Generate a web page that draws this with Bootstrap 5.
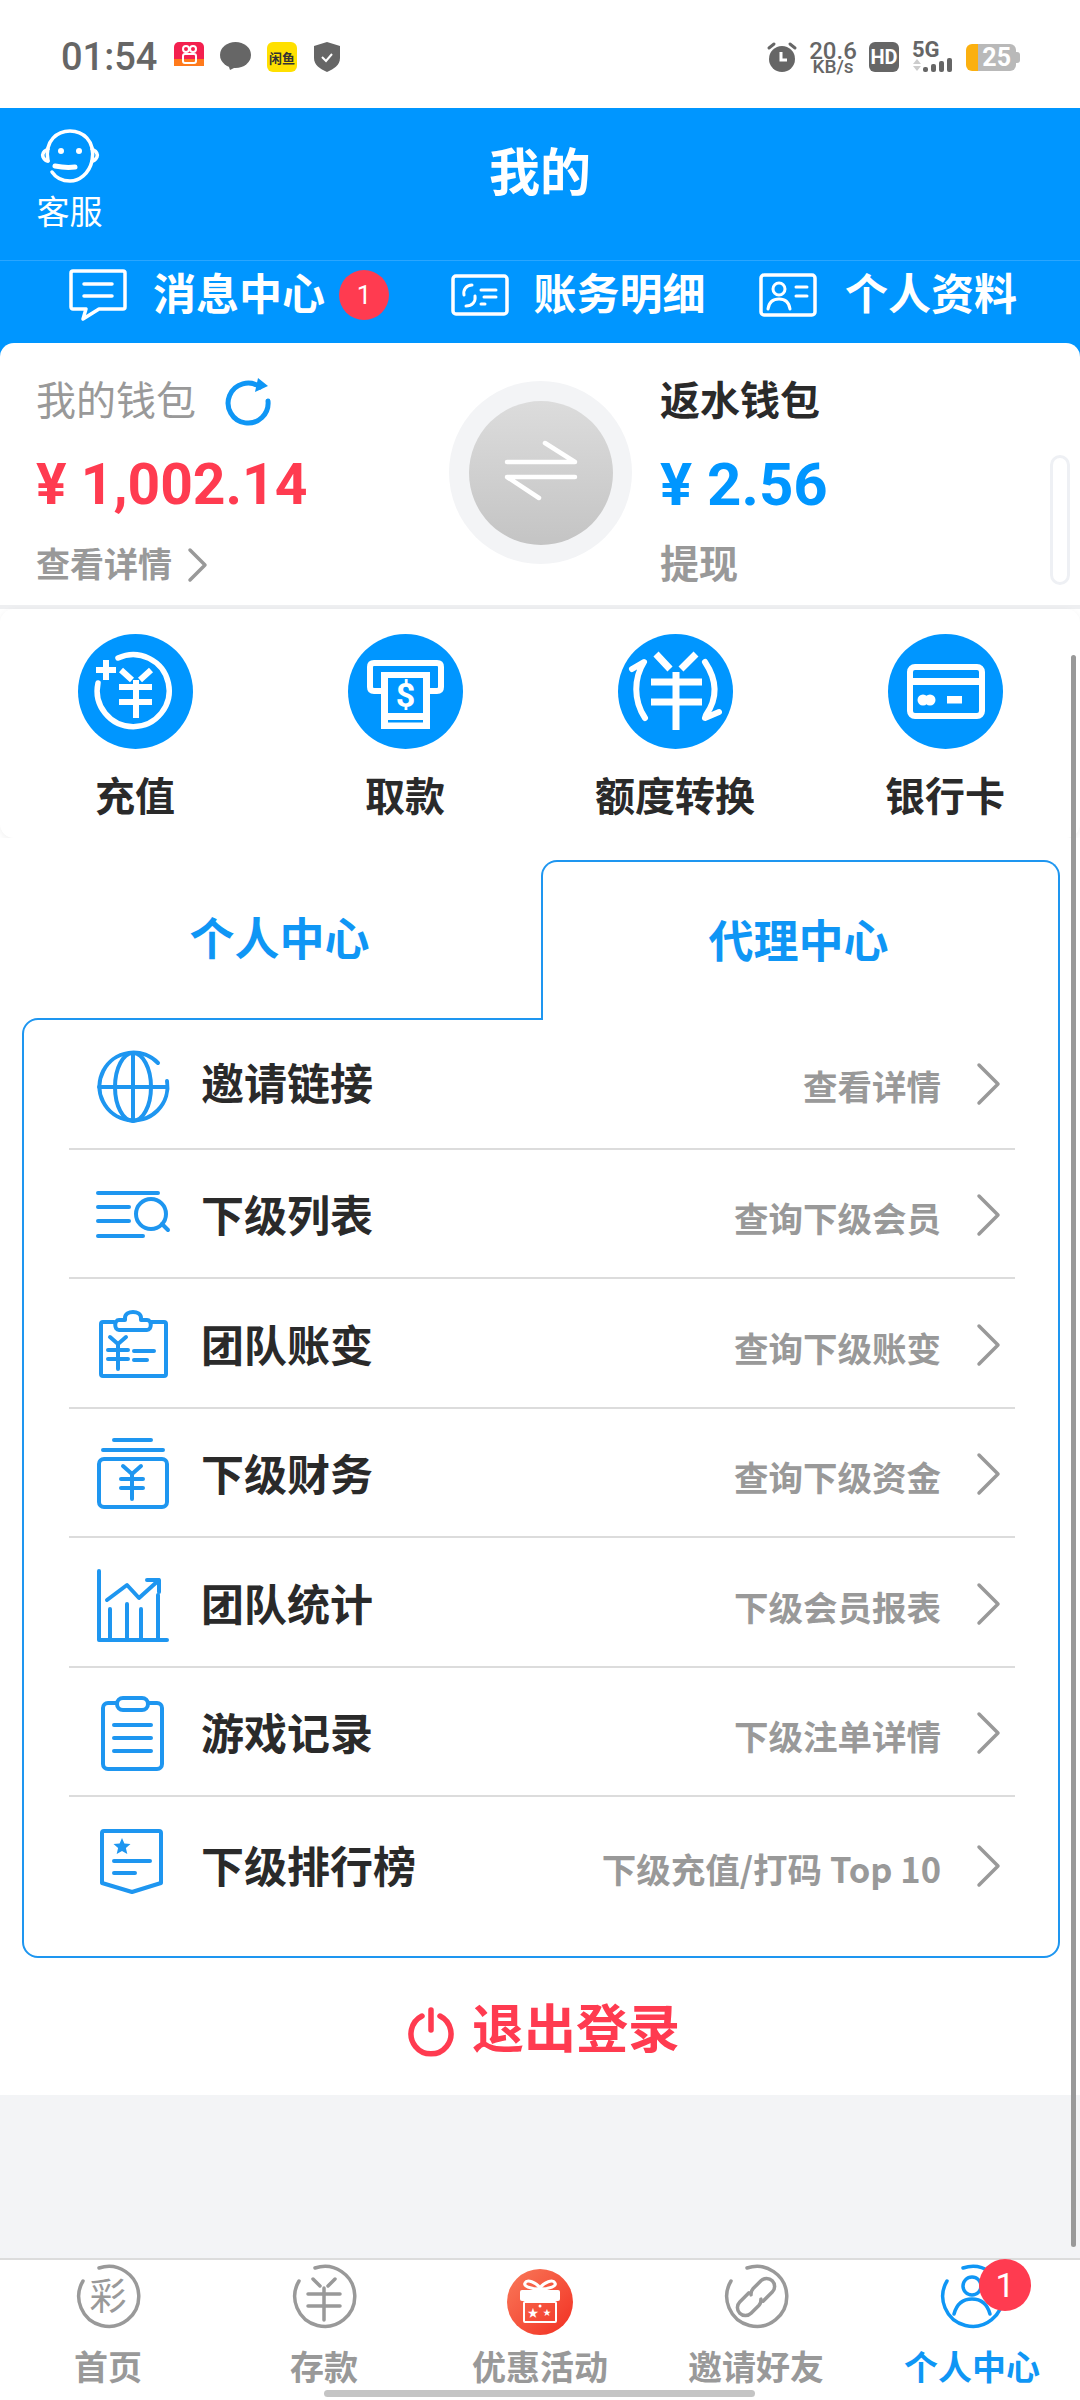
<!DOCTYPE html>
<html lang="zh-CN">
<head>
    <meta charset="UTF-8">
    <meta name="viewport" content="width=device-width, initial-scale=1.0">
    <title>我的</title>
    <link href="https://cdn.jsdelivr.net/npm/bootstrap@5.3.1/dist/css/bootstrap.min.css" rel="stylesheet">
    <style>
        html, body { height: 2400px; }
        body {
            width: 1080px;
            overflow: hidden;
            background: #fff;
            color: #2a2a2a;
            font-family: "Roboto", "Noto Sans CJK SC", sans-serif;
        }
        svg { display: block; overflow: visible; flex-shrink: 0; }
        .phone { position: relative; width: 1080px; height: 2400px; }

        /* status bar */
        .status-bar { height: 108px; padding: 42px 60px 0 61px; }
        .status-time { font-size: 38px; line-height: 30px; font-weight: 500; color: #666; margin-right: 17px; }
        .status-speed { width: 48px; margin: 0 12px; color: #666; text-align: center; font-weight: 500; }
        .status-speed b { display: block; font-size: 24px; line-height: 18px; font-weight: 500; }
        .status-speed i { display: block; font-size: 19px; line-height: 14px; font-style: normal; white-space: nowrap; }
        .hd-box { width: 30px; height: 30px; border-radius: 6px; background: #666; color: #fff; font-size: 20px; line-height: 30px; font-weight: 700; text-align: center; }
        .net-box { width: 44px; margin-left: 13px; height: 30px; }
        .net-box span { display: block; font-size: 22px; line-height: 16px; font-weight: 700; color: #666; }
        .batt { width: 50px; height: 27px; margin-left: 10px; border-radius: 6px; background: linear-gradient(90deg, #fbb010 24%, #b9b9b9 24%); color: #fff; font-size: 25px; line-height: 27px; font-weight: 700; text-align: right; padding-right: 5px; }
        .batt-tip { width: 4px; height: 11px; background: #b9b9b9; border-radius: 0 3px 3px 0; }

        /* blue header */
        .top-head { height: 152px; background: #0096ff; color: #fff; padding: 22px 0 0 36px; }
        .kefu-btn { width: 67px; }
        .kefu-btn span { display: block; font-size: 33px; line-height: 44px; margin-top: 9px; }
        .top-title { position: absolute; left: 0; right: 0; top: 141px; text-align: center; font-size: 51px; line-height: 66px; font-weight: 700; color: #fff; }
        .sub-nav { height: 83px; background: #0096ff; border-top: 1px solid #2aa6ff; padding: 0 63px 14px 69px; color: #fff; }
        .sub-item { font-size: 43px; line-height: 60px; font-weight: 700; }
        .dot-red { width: 50px; height: 50px; background: #ff3b50; color: #fff; font-size: 26px; font-weight: 400; line-height: 50px; text-align: center; border-radius: 50%; margin-left: 14px; }

        /* wallets */
        .wallet-wrap { background: linear-gradient(#0096ff 14px, #fff 14px); }
        .wallet-box { height: 262px; background: #fff; padding-top: 21px; border-radius: 14px 14px 0 0; }
        .wallet-left { width: 449px; padding-left: 36px; }
        .wallet-right { padding-left: 28px; }
        .wallet-label { font-size: 40px; line-height: 76px; color: #999; }
        .wallet-label.is-dark { color: #2a2a2a; font-weight: 700; }
        .wallet-money { font-size: 57px; line-height: 89px; font-weight: 700; color: #ff3b50; }
        .wallet-money.is-blue { color: #0096ff; font-size: 60px; }
        .wallet-link { font-size: 34px; line-height: 72px; color: #999; font-weight: 700; }
        .wallet-link.is-big { font-size: 39px; }
        .swap-ring { width: 183px; height: 183px; margin-top: 17px; border-radius: 50%; background: #f3f4f6; }
        .swap-core { width: 144px; height: 144px; border-radius: 50%; background: linear-gradient(180deg, #dcdcdc, #c4c4c4); }
        .mini-track { position: absolute; left: 1050px; top: 455px; width: 20px; height: 130px; border: 3px solid #eef0f4; border-radius: 10px; background: #fff; }

        /* quick actions */
        .gray-gap { height: 4px; background: #eeeff1; }
        .quick-box { height: 229px; background: #fff; padding-top: 25px; border-radius: 14px; box-shadow: 0 2px 6px rgba(0, 0, 0, .06); }
        .quick-ico { width: 115px; height: 115px; border-radius: 50%; background: #0096ff; margin: 0 auto; }
        .quick-txt { font-size: 40px; line-height: 50px; font-weight: 700; margin-top: 24px; color: #2a2a2a; }

        /* tabs + panel */
        .center-wrap { height: 1257px; background: #fff; padding: 22px 20px 0 22px; }
        .tab-strip { height: 158px; position: relative; z-index: 1; }
        .tab-btn { width: 50%; height: 158px; padding: 0 4px 0 0; font-size: 45px; line-height: 161px; font-weight: 700; color: #0f96f5; text-align: center; }
        .tab-btn.active { height: 160px; background: #fff; color: #0f96f5; border: 2px solid #1e96f0; border-bottom: 0; border-radius: 16px 16px 0 0; }
        .panel-box { height: 940px; border: 2px solid #1e96f0; border-radius: 16px 0 16px 16px; padding: 0 43px 0 45px; background: #fff; }
        .panel-list .row-item { height: 129.5px; padding: 0 15px 0 28px; background: transparent; border-color: #dcdcdc; border-width: 0 0 2px; }
        .panel-list .row-item:last-child { height: 158px; padding-bottom: 24px; border-bottom: 0; }
        .row-ico { width: 72px; height: 72px; margin-right: 32px; }
        .row-name { font-size: 43px; line-height: 60px; padding-top: 2px; font-weight: 700; color: #2a2a2a; }
        .row-desc { font-family: "Noto Sans CJK SC", sans-serif; font-size: 34.5px; line-height: 50px; padding-top: 2px; font-weight: 700; color: #999; margin-right: 36px; }
        .row-item + .row-item .row-name,
        .row-item + .row-item .row-desc { padding-top: 8px; }
        .row-item + .row-item .row-arrow { margin-top: 4px; }

        .logout-bar { height: 137px; padding: 8px 0 0 7px; color: #ff3b50; font-size: 52px; font-weight: 700; }
        .gray-fill { height: 163px; background: #f3f4f6; }

        /* bottom tabs */
        .foot-nav { height: 142px; border-top: 2px solid #dcdcdc; background: #fff; }
        .foot-item { width: 216px; position: relative; padding-top: 4px; }
        .foot-item span { display: block; margin-top: 9px; font-size: 34px; line-height: 50px; font-weight: 700; color: #999; }
        .foot-item.is-on span { color: #0f96f5; }
        .foot-badge { position: absolute; left: 115px; top: -1px; width: 52px; height: 52px; line-height: 52px; border-radius: 50%; background: #ff3b50; color: #fff; font-size: 34px; text-align: center; }
        .home-bar { position: absolute; left: 324px; bottom: 3px; width: 431px; height: 7px; border-radius: 4px; background: #c4c4c4; }
        .page-scroll { position: absolute; left: 1071px; top: 655px; width: 5px; height: 1592px; border-radius: 3px; background: #999; z-index: 2; }

        .line-blue { fill: none; stroke: #1e96f0; stroke-width: 4; stroke-linecap: round; stroke-linejoin: round; }
        .line-white { fill: none; stroke: #fff; stroke-linecap: round; stroke-linejoin: round; }
        .line-gray { fill: none; stroke: #999; stroke-width: 3.5; stroke-linecap: round; stroke-linejoin: round; }
    </style>
</head>
<body>
<div class="phone">

    <!-- Status bar -->
    <div class="status-bar d-flex align-items-start">
        <div class="status-time">01:54</div>
        <svg width="30" height="30" viewBox="0 0 30 30">
            <rect width="30" height="30" rx="5" fill="#f3204f"/>
            <rect y="17" width="30" height="8" fill="#ff7a1c"/>
            <rect y="24" width="30" height="6" fill="#fff"/>
            <circle cx="12" cy="7" r="3" fill="none" stroke="#fff" stroke-width="2"/>
            <circle cx="19" cy="7" r="3" fill="none" stroke="#fff" stroke-width="2"/>
            <rect x="9" y="12" width="13" height="9" rx="2" fill="none" stroke="#fff" stroke-width="2"/>
        </svg>
        <svg class="ms-3" width="31" height="30" viewBox="0 0 31 30"><ellipse cx="15.5" cy="13" rx="15.5" ry="13" fill="#666"/><path d="M8 22l2 6 8-4z" fill="#666"/></svg>
        <svg class="ms-3" width="30" height="30" viewBox="0 0 30 30">
            <rect width="30" height="30" rx="6" fill="#ffe000"/>
            <text x="15" y="21" text-anchor="middle" font-size="13" font-weight="700" fill="#333" font-family="Noto Sans CJK SC">闲鱼</text>
        </svg>
        <svg style="margin-left:17px" width="26" height="30" viewBox="0 0 26 30"><path d="M13 0l13 4v12c0 7-6 11-13 14C6 27 0 23 0 16V4z" fill="#666"/><path d="M8 15l4 4 6-7" fill="none" stroke="#fff" stroke-width="2"/></svg>
        <div class="flex-grow-1"></div>
        <svg width="30" height="30" viewBox="0 0 30 30">
            <circle cx="15" cy="17" r="13" fill="#666"/>
            <path d="M2 6l5-4M28 6l-5-4" stroke="#666" stroke-width="3" stroke-linecap="round"/>
            <path d="M14 10v8h6" fill="none" stroke="#fff" stroke-width="3"/>
        </svg>
        <div class="status-speed"><b>20.6</b><i>KB/s</i></div>
        <div class="hd-box">HD</div>
        <div class="net-box">
            <span>5G</span>
            <svg width="44" height="14" viewBox="0 0 44 14">
                <path d="M5 1l4 5H1zM5 13l4-5H1z" fill="#ccc"/>
                <rect x="11" y="9" width="5" height="5" rx="2" fill="#666"/>
                <rect x="19" y="6" width="5" height="8" rx="2" fill="#666"/>
                <rect x="27" y="3" width="5" height="11" rx="2" fill="#666"/>
                <rect x="35" y="0" width="5" height="14" rx="2" fill="#666"/>
            </svg>
        </div>
        <div class="batt" style="margin-top:2px">25</div>
        <div class="batt-tip" style="margin-top:10px"></div>
    </div>

    <!-- Header -->
    <div class="top-head">
        <div class="kefu-btn text-center">
            <svg class="mx-auto" width="58" height="52" viewBox="0 0 58 52">
                <path class="line-white" stroke-width="3.5" d="M7 31C3 10 17 1 29 1s26 9 22 30c-3 13-13 20-22 20-8 0-14-3-18-9"/>
                <path class="line-white" stroke-width="3.5" d="M7 19c-4 2-6 5-5 8 1 2 3 4 5 4M51 19c4 2 6 5 5 8-1 2-3 4-5 4"/>
                <circle cx="20" cy="21" r="3" fill="#fff"/><circle cx="38" cy="21" r="3" fill="#fff"/>
                <path class="line-white" stroke-width="5" d="M14 36c5 1 12 2 20 1"/>
            </svg>
            <span>客服</span>
        </div>
    </div>
    <div class="top-title">我的</div>

    <div class="sub-nav d-flex align-items-center justify-content-between">
        <div class="d-flex align-items-center">
            <svg width="58" height="52" viewBox="0 0 58 52" style="margin-right:26px">
                <path class="line-white" stroke-width="3.5" d="M4 2h50a2 2 0 0 1 2 2v34a2 2 0 0 1-2 2H30L14 50l3-10H4a2 2 0 0 1-2-2V4a2 2 0 0 1 2-2z"/>
                <path class="line-white" stroke-width="3.5" d="M15 15h28M15 27h28"/>
            </svg>
            <div class="sub-item">消息中心</div>
            <div class="dot-red">1</div>
        </div>
        <div class="d-flex align-items-center ms-2">
            <svg width="58" height="42" viewBox="0 0 58 42" style="margin-right:25px">
                <rect class="line-white" stroke-width="3.5" x="2" y="2" width="54" height="38" rx="3"/>
                <path class="line-white" stroke-width="3" d="M21 11c-6 0-9 5-8 10M15 32c6 0 10-4 9-10M30 16h15M33 23h12M30 30h4"/>
            </svg>
            <div class="sub-item">账务明细</div>
        </div>
        <div class="d-flex align-items-center">
            <svg width="58" height="44" viewBox="0 0 58 44" style="margin-right:28px">
                <rect class="line-white" stroke-width="3.5" x="2" y="2" width="54" height="40" rx="3"/>
                <circle class="line-white" stroke-width="3" cx="20" cy="16" r="6"/>
                <path class="line-white" stroke-width="3" d="M9 36c1-7 5-10 11-10s10 3 11 10M37 14h11M37 23h11"/>
            </svg>
            <div class="sub-item">个人资料</div>
        </div>
    </div>

    <!-- Wallets -->
    <div class="wallet-wrap">
        <div class="wallet-box d-flex">
            <div class="wallet-left">
                <div class="wallet-label d-flex align-items-center">我的钱包
                    <svg style="margin-left:31px" width="44" height="48" viewBox="0 0 44 48">
                        <path fill="none" stroke="#0f96f5" stroke-width="5" stroke-linecap="round" d="M33 9A20 20 0 1 0 41 23"/>
                        <path fill="#0f96f5" d="M31 0l10 8-13 6z"/>
                    </svg>
                </div>
                <div class="wallet-money">¥ 1,002.14</div>
                <div class="wallet-link d-flex align-items-center">查看详情
                    <svg class="ms-3" width="19" height="34" viewBox="0 0 19 34"><path d="M2 2l15 15L2 32" fill="none" stroke="#999" stroke-width="3.5" stroke-linecap="round" stroke-linejoin="round"/></svg>
                </div>
            </div>
            <div class="swap-ring d-flex align-items-center justify-content-center">
                <div class="swap-core d-flex align-items-center justify-content-center">
                    <svg width="72" height="60" viewBox="0 0 72 60">
                        <path class="line-white" stroke-width="4.5" d="M2 19h68L40 0M70 34H2l32 21"/>
                    </svg>
                </div>
            </div>
            <div class="wallet-right">
                <div class="wallet-label is-dark">返水钱包</div>
                <div class="wallet-money is-blue">¥ 2.56</div>
                <div class="wallet-link is-big">提现</div>
            </div>
        </div>
    </div>
    <div class="mini-track"></div>
    <div class="gray-gap"></div>

    <!-- Quick actions -->
    <div class="quick-box row g-0 text-center">
        <div class="col-3">
            <div class="quick-ico">
                <svg width="115" height="115" viewBox="0 0 115 115">
                    <path class="line-white" stroke-width="5.5" d="M40 24A36 36 0 1 1 20 49"/>
                    <path class="line-white" stroke-width="6" style="stroke-linecap:butt" d="M18 36h20M28 26v20"/>
                    <path class="line-white" stroke-width="6" style="stroke-linecap:butt" d="M43 36l11 10M73 36L62 46M41 53h33M41 68h33M58 46v38"/>
                </svg>
            </div>
            <div class="quick-txt">充值</div>
        </div>
        <div class="col-3">
            <div class="quick-ico">
                <svg width="115" height="115" viewBox="0 0 115 115">
                    <path class="line-white" stroke-width="6" d="M33 57h-7q-4 0-4-4V33q0-4 4-4h63q4 0 4 4v20q0 4-4 4h-7"/>
                    <rect x="33" y="38" width="49" height="57" fill="#fff"/>
                    <rect x="40" y="44" width="35" height="35" fill="#0096ff"/>
                    <rect x="40" y="86" width="35" height="2.5" fill="#0096ff"/>
                    <text x="57.5" y="73" text-anchor="middle" font-size="34" font-weight="700" fill="#fff" font-family="Roboto">$</text>
                </svg>
            </div>
            <div class="quick-txt">取款</div>
        </div>
        <div class="col-3">
            <div class="quick-ico">
                <svg width="115" height="115" viewBox="0 0 115 115">
                    <path class="line-white" stroke-width="7" style="stroke-linecap:butt" d="M38 20l14 15M78 20L63 35M33 48h51M33 68h51M58 38v58"/>
                    <path class="line-white" stroke-width="6" d="M27 84C15 66 16 44 26 28l-12 7"/>
                    <path class="line-white" stroke-width="6" d="M87 28c12 18 13 36 1 53l-1 3 14-6"/>
                </svg>
            </div>
            <div class="quick-txt">额度转换</div>
        </div>
        <div class="col-3">
            <div class="quick-ico">
                <svg width="115" height="115" viewBox="0 0 115 115">
                    <rect class="line-white" stroke-width="6" x="22" y="33" width="72" height="49" rx="5"/>
                    <rect x="22" y="44" width="72" height="7" fill="#fff"/>
                    <circle cx="35" cy="66" r="5.5" fill="#fff"/><circle cx="42" cy="66" r="5.5" fill="#fff"/>
                    <rect x="59" y="62" width="15" height="7.5" fill="#fff"/>
                </svg>
            </div>
            <div class="quick-txt">银行卡</div>
        </div>
    </div>

    <!-- Tabs + list -->
    <div class="center-wrap">
        <div class="tab-strip nav">
            <a class="nav-link tab-btn" href="#">个人中心</a>
            <a class="nav-link tab-btn active" href="#">代理中心</a>
        </div>
        <div class="panel-box">
            <ul class="panel-list list-group list-group-flush">
                <li class="row-item list-group-item d-flex align-items-center">
                    <svg class="row-ico" viewBox="0 0 72 72">
                        <path class="line-blue" d="M61 15A34 34 0 1 0 70 33"/>
                        <ellipse class="line-blue" cx="36" cy="39" rx="18" ry="34"/>
                        <path class="line-blue" d="M36 5v68M2 39h68"/>
                    </svg>
                    <div class="row-name">邀请链接</div>
                    <div class="row-desc ms-auto">查看详情</div>
                    <svg class="row-arrow" width="23" height="42" viewBox="0 0 23 42"><path d="M2 2l19 19L2 40" fill="none" stroke="#999" stroke-width="3.5" stroke-linecap="round" stroke-linejoin="round"/></svg>
                </li>
                <li class="row-item list-group-item d-flex align-items-center">
                    <svg class="row-ico" viewBox="0 0 72 72">
                        <path class="line-blue" d="M1 16h60M1 30h31M1 44h31M1 59h45"/>
                        <circle class="line-blue" cx="54" cy="37" r="15"/>
                        <path class="line-blue" d="M65 47l6 6"/>
                    </svg>
                    <div class="row-name">下级列表</div>
                    <div class="row-desc ms-auto">查询下级会员</div>
                    <svg class="row-arrow" width="23" height="42" viewBox="0 0 23 42"><path d="M2 2l19 19L2 40" fill="none" stroke="#999" stroke-width="3.5" stroke-linecap="round" stroke-linejoin="round"/></svg>
                </li>
                <li class="row-item list-group-item d-flex align-items-center">
                    <svg class="row-ico" viewBox="0 0 72 72">
                        <path class="line-blue" d="M17 15H6q-2 0-2 2v50q0 2 2 2h61q2 0 2-2V17q0-2-2-2H54"/>
                        <path class="line-blue" d="M22 13h6v-2c0-8 16-8 16 0v2h6c5 0 5 10 0 10H22c-5 0-5-10 0-10z"/>
                        <path class="line-blue" d="M13 30l8 7 8-7M11 43h20M11 52h20M21 37v25M37 44h20M37 53h13"/>
                    </svg>
                    <div class="row-name">团队账变</div>
                    <div class="row-desc ms-auto">查询下级账变</div>
                    <svg class="row-arrow" width="23" height="42" viewBox="0 0 23 42"><path d="M2 2l19 19L2 40" fill="none" stroke="#999" stroke-width="3.5" stroke-linecap="round" stroke-linejoin="round"/></svg>
                </li>
                <li class="row-item list-group-item d-flex align-items-center">
                    <svg class="row-ico" viewBox="0 0 72 72">
                        <path class="line-blue" d="M17 4h37M6 14h60"/>
                        <rect class="line-blue" x="2" y="23" width="68" height="48" rx="5"/>
                        <path class="line-blue" d="M26 30l9 8 9-8M24 43h22M24 52h22M35 38v25"/>
                    </svg>
                    <div class="row-name">下级财务</div>
                    <div class="row-desc ms-auto">查询下级资金</div>
                    <svg class="row-arrow" width="23" height="42" viewBox="0 0 23 42"><path d="M2 2l19 19L2 40" fill="none" stroke="#999" stroke-width="3.5" stroke-linecap="round" stroke-linejoin="round"/></svg>
                </li>
                <li class="row-item list-group-item d-flex align-items-center">
                    <svg class="row-ico" viewBox="0 0 72 72">
                        <path class="line-blue" d="M2 5v69h68"/>
                        <path class="line-blue" d="M13 43v31M30 38v36M44 43v31M61 29v45"/>
                        <path class="line-blue" d="M10 34l20-15 12 13 20-18M50 14h12v12"/>
                    </svg>
                    <div class="row-name">团队统计</div>
                    <div class="row-desc ms-auto">下级会员报表</div>
                    <svg class="row-arrow" width="23" height="42" viewBox="0 0 23 42"><path d="M2 2l19 19L2 40" fill="none" stroke="#999" stroke-width="3.5" stroke-linecap="round" stroke-linejoin="round"/></svg>
                </li>
                <li class="row-item list-group-item d-flex align-items-center">
                    <svg class="row-ico" viewBox="0 0 72 72">
                        <rect class="line-blue" x="6" y="8" width="59" height="66" rx="5"/>
                        <rect class="line-blue" x="20" y="3" width="31" height="12" rx="6" style="fill:#fff"/>
                        <path class="line-blue" d="M17 30h37M17 43h37M17 56h37"/>
                    </svg>
                    <div class="row-name">游戏记录</div>
                    <div class="row-desc ms-auto">下级注单详情</div>
                    <svg class="row-arrow" width="23" height="42" viewBox="0 0 23 42"><path d="M2 2l19 19L2 40" fill="none" stroke="#999" stroke-width="3.5" stroke-linecap="round" stroke-linejoin="round"/></svg>
                </li>
                <li class="row-item list-group-item d-flex align-items-center">
                    <svg class="row-ico" viewBox="0 0 72 72">
                        <path class="line-blue" d="M7 3h55q2 0 2 2v50l-29 9-30-9V5q0-2 2-2z"/>
                        <path d="M25 10l2.4 5.6 6.1.5-4.6 4 1.4 6-5.3-3.2-5.3 3.2 1.4-6-4.6-4 6.1-.5z" fill="#1e96f0"/>
                        <path class="line-blue" d="M17 33h36M17 45h21"/>
                    </svg>
                    <div class="row-name">下级排行榜</div>
                    <div class="row-desc ms-auto">下级充值/打码 Top 10</div>
                    <svg class="row-arrow" width="23" height="42" viewBox="0 0 23 42"><path d="M2 2l19 19L2 40" fill="none" stroke="#999" stroke-width="3.5" stroke-linecap="round" stroke-linejoin="round"/></svg>
                </li>
            </ul>
        </div>
        <div class="logout-bar d-flex align-items-center justify-content-center">
            <svg width="44" height="46" viewBox="0 0 44 46" style="margin-right:19px">
                <path d="M13 8a20 20 0 1 0 18 0M22 2v20" fill="none" stroke="#ff3b50" stroke-width="5.5" stroke-linecap="round"/>
            </svg>
            <div>退出登录</div>
        </div>
    </div>

    <div class="gray-fill"></div>

    <!-- Bottom tabs -->
    <div class="foot-nav d-flex text-center">
        <div class="foot-item">
            <svg class="mx-auto" width="70" height="70" viewBox="0 0 70 70">
                <path class="line-gray" d="M26 4A30 30 0 1 1 10 17"/>
                <text x="35" y="46" text-anchor="middle" font-size="37" fill="#999" font-family="Noto Sans CJK SC">彩</text>
            </svg>
            <span>首页</span>
        </div>
        <div class="foot-item">
            <svg class="mx-auto" width="70" height="70" viewBox="0 0 70 70">
                <path class="line-gray" d="M26 4A30 30 0 1 1 10 17"/>
                <path class="line-gray" d="M24 15l7 7M46 15l-7 7M19 30h32M19 42h32M35 24v32"/>
            </svg>
            <span>存款</span>
        </div>
        <div class="foot-item">
            <svg class="mx-auto" width="70" height="70" viewBox="0 0 70 70">
                <defs><linearGradient id="giftBg" x1="0" y1="0" x2="1" y2="1"><stop offset="0" stop-color="#f97a5a"/><stop offset="1" stop-color="#f22f22"/></linearGradient></defs>
                <circle cx="35" cy="38" r="33" fill="url(#giftBg)"/>
                <path d="M35 24c-4-6-13-9-15-5-2 3 5 6 15 6 10 0 17-3 15-6-2-4-11-1-15 5z" fill="none" stroke="#fff" stroke-width="3"/>
                <rect x="15" y="26" width="40" height="11" rx="2" fill="#fff"/>
                <rect x="19" y="38" width="32" height="20" rx="1" fill="none" stroke="#fff" stroke-width="2"/>
                <text x="28" y="53" text-anchor="middle" font-size="11" fill="#fff">★</text>
                <text x="42" y="51" text-anchor="middle" font-size="8" fill="#fff">★</text>
                <circle cx="35" cy="42" r="1.5" fill="#fff"/>
            </svg>
            <span>优惠活动</span>
        </div>
        <div class="foot-item">
            <svg class="mx-auto" width="70" height="70" viewBox="0 0 70 70">
                <path class="line-gray" d="M26 4A30 30 0 1 1 10 17"/>
                <g transform="rotate(-45 35 33)">
                    <path class="line-gray" d="M33 25H20a8 8 0 0 0 0 16h11a8 8 0 0 0 6-3"/>
                    <path class="line-gray" d="M37 41h13a8 8 0 0 0 0-16H39a8 8 0 0 0-6 3"/>
                </g>
            </svg>
            <span>邀请好友</span>
        </div>
        <div class="foot-item is-on">
            <svg class="mx-auto" width="70" height="70" viewBox="0 0 70 70">
                <path d="M26 4A30 30 0 1 1 10 17" fill="none" stroke="#0f96f5" stroke-width="3.5" stroke-linecap="round"/>
                <circle cx="35" cy="22" r="9" fill="none" stroke="#0f96f5" stroke-width="3.5"/>
                <path d="M17 50c3-11 10-15 18-15s15 4 18 15" fill="none" stroke="#0f96f5" stroke-width="3.5" stroke-linecap="round"/>
            </svg>
            <span>个人中心</span>
            <div class="foot-badge">1</div>
        </div>
    </div>
    <div class="home-bar"></div>
    <div class="page-scroll"></div>
</div>

<script src="https://cdn.jsdelivr.net/npm/bootstrap@5.3.1/dist/js/bootstrap.bundle.min.js"></script>
</body>
</html>
